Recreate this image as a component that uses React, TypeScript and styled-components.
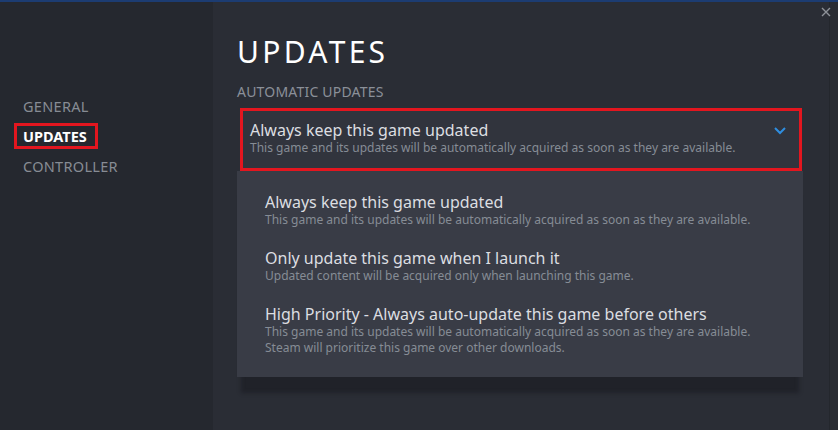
import React from 'react';
import styled, { createGlobalStyle } from 'styled-components';

const GlobalStyle = createGlobalStyle`
  html, body {
    margin: 0;
    padding: 0;
    background: #2a2d35;
  }
  body {
    font-family: 'Noto Sans', 'Open Sans', Arial, sans-serif;
  }
  * {
    box-sizing: border-box;
  }
`;

const Window = styled.div`
  position: relative;
  display: flex;
  height: 430px;
  border-top: 2px solid #1c3c72;
  background: #2a2d35;
  overflow: hidden;
`;

const Sidebar = styled.nav`
  width: 213px;
  flex-shrink: 0;
  background: #25282f;
  padding-top: 89px;
`;

const NavItem = styled.div`
  display: flex;
  align-items: center;
  height: 30px;
  padding-left: 23px;
`;

const NavLabel = styled.span<{ $active?: boolean }>`
  font-size: 14.5px;
  line-height: 20px;
  letter-spacing: 0.3px;
  text-transform: uppercase;
  color: ${(p) => (p.$active ? '#ffffff' : '#878c94')};
  font-weight: ${(p) => (p.$active ? 700 : 400)};
  ${(p) =>
    p.$active &&
    `
    letter-spacing: 0;
    border: 3px solid #e3161f;
    padding: 0 8px 0 6px;
    margin-left: -9px;
  `}
`;

const Main = styled.main`
  flex: 1;
  padding: 32px 26px 0 24px;
`;

const Heading = styled.h1`
  margin: 0;
  font-size: 30px;
  line-height: 36px;
  font-weight: 400;
  letter-spacing: 3.3px;
  color: #ffffff;
`;

const SectionLabel = styled.div`
  margin-top: 13px;
  font-size: 14px;
  line-height: 18px;
  letter-spacing: 0.2px;
  color: #8b9099;
  text-transform: uppercase;
`;

const Field = styled.div`
  display: flex;
  align-items: flex-start;
  justify-content: space-between;
  margin: 7px 1px 0 3px;
  padding: 9px 13px 12px 7px;
  border: 3px solid #e3161f;
  background: #31343d;
`;

const OptionText = styled.div`
  display: flex;
  flex-direction: column;
`;

const OptionTitle = styled.div`
  font-size: 16px;
  line-height: 20px;
  color: #dcdee1;
`;

const OptionDesc = styled.div`
  font-size: 12px;
  line-height: 16px;
  color: #868c95;
`;

const Chevron = styled.svg`
  margin-top: 7px;
  flex-shrink: 0;
`;

const Menu = styled.div`
  padding: 11px 0;
  background: #393c46;
  box-shadow: 0 20px 4px -4px rgba(14, 15, 19, 0.35);
`;

const MenuItem = styled.div`
  padding: 10px 28px;
`;

const Gutter = styled.div`
  width: 9px;
  flex-shrink: 0;
  border-left: 1px solid #24272d;
  background: #292c33;
`;

const CloseButton = styled.button`
  position: absolute;
  top: 5px;
  right: 7px;
  width: 10px;
  height: 10px;
  padding: 0;
  border: none;
  background: none;
  cursor: pointer;
  display: flex;
`;

const options = [
  {
    title: 'Always keep this game updated',
    desc: ['This game and its updates will be automatically acquired as soon as they are available.'],
  },
  {
    title: 'Only update this game when I launch it',
    desc: ['Updated content will be acquired only when launching this game.'],
  },
  {
    title: 'High Priority - Always auto-update this game before others',
    desc: [
      'This game and its updates will be automatically acquired as soon as they are available.',
      'Steam will prioritize this game over other downloads.',
    ],
  },
];

const navItems = ['General', 'Updates', 'Controller'];

export default function App() {
  const selected = options[0];

  return (
    <>
      <GlobalStyle />
      <Window>
        <Sidebar>
          {navItems.map((item) => (
            <NavItem key={item}>
              <NavLabel $active={item === 'Updates'}>{item}</NavLabel>
            </NavItem>
          ))}
        </Sidebar>

        <Main>
          <Heading>UPDATES</Heading>
          <SectionLabel>Automatic Updates</SectionLabel>

          <Field>
            <OptionText>
              <OptionTitle>{selected.title}</OptionTitle>
              <OptionDesc>{selected.desc[0]}</OptionDesc>
            </OptionText>
            <Chevron width="12" height="8" viewBox="0 0 12 8" fill="none">
              <polyline points="1,1 6,6 11,1" stroke="#2f8ee0" strokeWidth="2" />
            </Chevron>
          </Field>

          <Menu>
            {options.map((opt) => (
              <MenuItem key={opt.title}>
                <OptionTitle>{opt.title}</OptionTitle>
                {opt.desc.map((line) => (
                  <OptionDesc key={line}>{line}</OptionDesc>
                ))}
              </MenuItem>
            ))}
          </Menu>
        </Main>

        <Gutter />

        <CloseButton aria-label="Close">
          <svg width="10" height="10" viewBox="0 0 10 10">
            <path d="M1 1 L9 9 M9 1 L1 9" stroke="#8d9198" strokeWidth="1.4" />
          </svg>
        </CloseButton>
      </Window>
    </>
  );
}
